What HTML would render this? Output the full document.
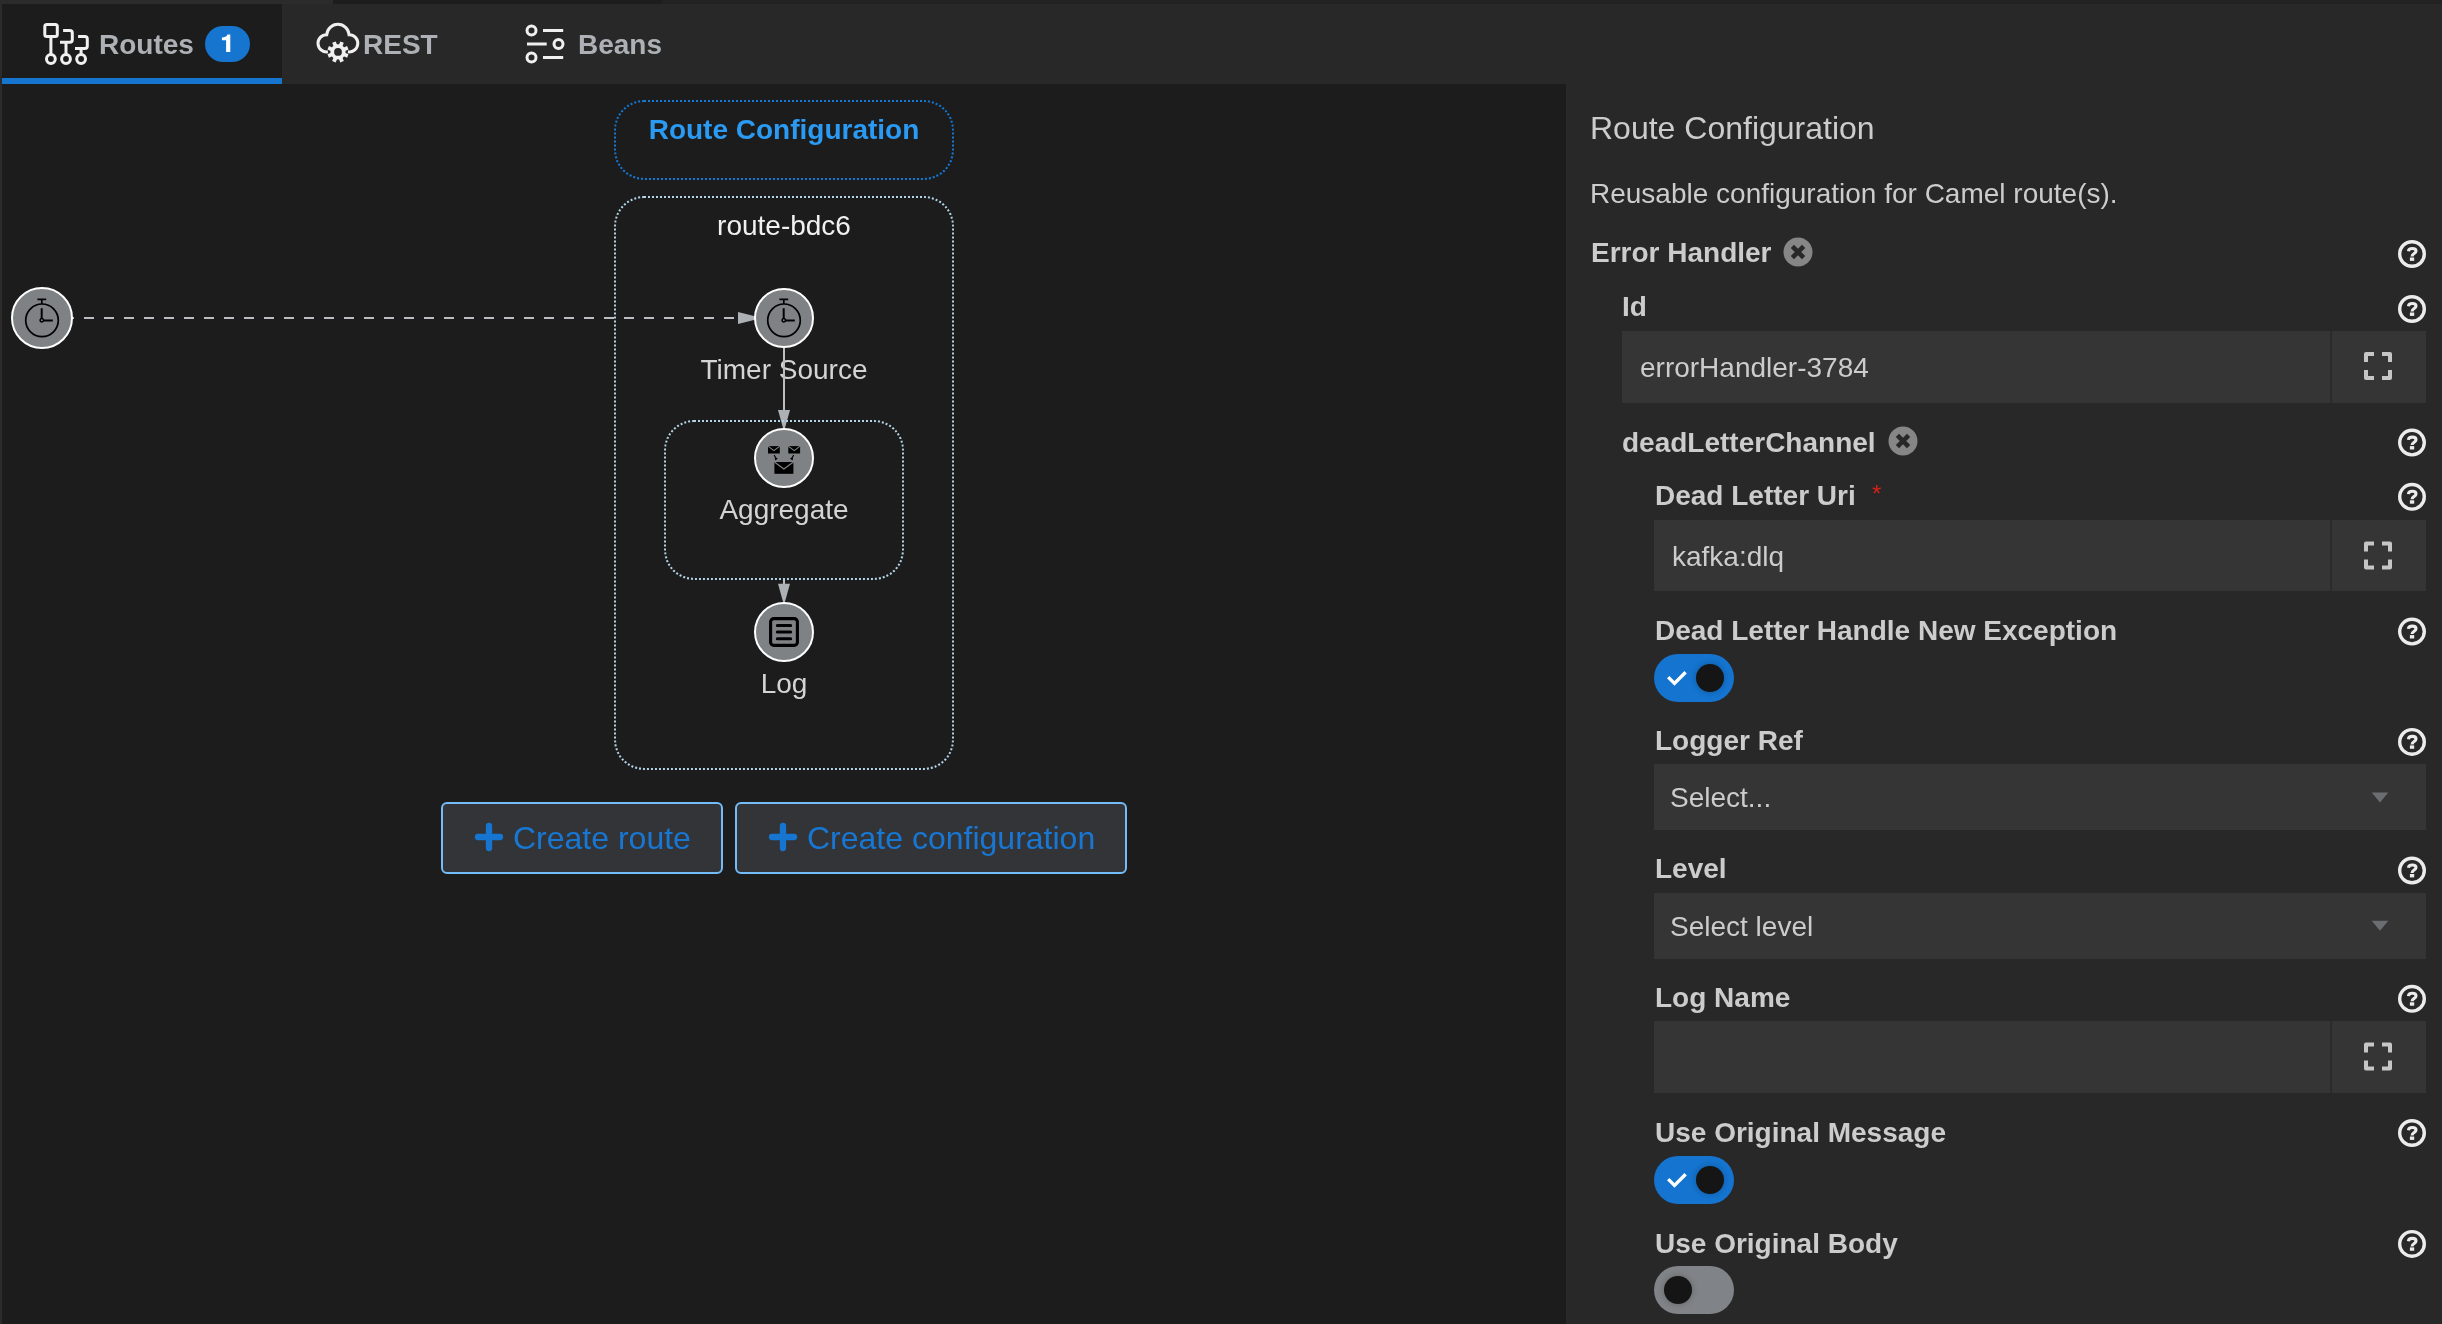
<!DOCTYPE html>
<html>
<head>
<meta charset="utf-8">
<title>Karavan</title>
<style>
html,body{margin:0;padding:0;}
body{width:2442px;height:1324px;overflow:hidden;background:#1c1c1c;font-family:"Liberation Sans",sans-serif;position:relative;}
.abs{position:absolute;}
.t{position:absolute;white-space:nowrap;line-height:1;will-change:transform;}
.b{font-weight:bold;}
#tabbar{left:0;top:0;width:2442px;height:84px;background:#282828;}
#topl{left:0;top:0;width:333px;height:4px;background:#2b2b2b;}
#topd{left:333px;top:0;width:329px;height:4px;background:#1d1d1d;}
#topr{left:662px;top:0;width:1780px;height:4px;background:#222222;}
#leftb{left:0;top:0;width:2px;height:1324px;background:#2b2b2b;}
#acttab{left:2px;top:4px;width:280px;height:74px;background:#1c1c1c;}
#actline{left:2px;top:78px;width:280px;height:6px;background:#1575cf;}
.tab{font-size:28px;font-weight:bold;color:#adb1b5;}
#badge{left:205px;top:26px;width:45px;height:36px;border-radius:18px;background:#1575cf;}
#panel{left:1566px;top:84px;width:876px;height:1240px;background:#282828;}
.lbl{font-size:28px;font-weight:bold;color:#cccccc;}
.inp{background:#353535;}
.val{font-size:28px;color:#cccccc;}
.glabel{font-size:28px;color:#d4d4d4;}
</style>
</head>
<body>
<div id="tabbar" class="abs"></div>
<div id="topl" class="abs"></div>
<div id="topd" class="abs"></div>
<div id="topr" class="abs"></div>
<div id="leftb" class="abs"></div>
<div id="acttab" class="abs"></div>
<div id="actline" class="abs"></div>

<!-- TAB ICONS -->
<div id="badge" class="abs"></div>
<svg class="abs" style="left:0;top:0" width="700" height="84" viewBox="0 0 700 84" fill="none" stroke="#f0f0f0" stroke-width="3">
  <!-- routes icon -->
  <rect x="44.8" y="24.5" width="12.5" height="12" rx="2"/>
  <path d="M50.9 38 V54"/>
  <circle cx="50.9" cy="59" r="4.4"/>
  <circle cx="66" cy="59" r="4.4"/>
  <circle cx="81.1" cy="59" r="4.4"/>
  <path d="M63.1 30.5 H69.8 Q72.3 30.5 72.3 33 V39.8 Q72.3 42.3 69.8 42.3 H60 M66 42.3 V54"/>
  <path d="M78.1 36.5 H84.8 Q87.3 36.5 87.3 39 V45.9 Q87.3 48.4 84.8 48.4 H75 M81.1 48.4 V54"/>
  <path d="M230.300 34.500 V51.900 H226.100 V40.300 H221.900 V37.500 C224.600 37.500 226.700 36.700 227.400 34.500 Z" fill="#fff" stroke="none"/>
  <!-- rest icon -->
  <path d="M327.900 51.800 A8.600 8.600 0 1 1 326.730 34.700 A11.200 11.200 0 0 1 349.070 34.700 A8.600 8.600 0 1 1 347.900 51.800"/>
  <g transform="translate(338 51.9)" fill="#f0f0f0" stroke="none"><path fill-rule="evenodd" d="M0 -7.600 A7.600 7.600 0 1 1 0 7.600 A7.600 7.600 0 1 1 0 -7.600 Z M0 -3.900 A3.900 3.900 0 1 0 0 3.900 A3.900 3.900 0 1 0 0 -3.900 Z"/><rect x="-1.900" y="-10.600" width="3.800" height="4.200" transform="rotate(22.5)"/><rect x="-1.900" y="-10.600" width="3.800" height="4.200" transform="rotate(67.5)"/><rect x="-1.900" y="-10.600" width="3.800" height="4.200" transform="rotate(112.5)"/><rect x="-1.900" y="-10.600" width="3.800" height="4.200" transform="rotate(157.5)"/><rect x="-1.900" y="-10.600" width="3.800" height="4.200" transform="rotate(202.5)"/><rect x="-1.900" y="-10.600" width="3.800" height="4.200" transform="rotate(247.5)"/><rect x="-1.900" y="-10.600" width="3.800" height="4.200" transform="rotate(292.5)"/><rect x="-1.900" y="-10.600" width="3.800" height="4.200" transform="rotate(337.5)"/></g>
  <!-- beans icon -->
  <circle cx="531.5" cy="30.4" r="4.5"/>
  <circle cx="558.5" cy="43.9" r="4.5"/>
  <circle cx="531.5" cy="57.5" r="4.5"/>
  <path d="M543 30.4 H563.2 M527 43.9 H546.7 M543 57.5 H563.2"/>
</svg>
<div class="t tab" style="left:98.500px;top:31px">Routes</div>
<div class="t tab" style="left:362.500px;top:31px">REST</div>
<div class="t tab" style="left:577.500px;top:31px">Beans</div>

<!-- BUTTON BOXES -->
<div class="abs" style="left:441px;top:802px;width:278px;height:68px;border:2px solid #73bcf7;border-radius:6px;background:#333438"></div>
<div class="abs" style="left:735px;top:802px;width:388px;height:68px;border:2px solid #73bcf7;border-radius:6px;background:#333438"></div>
<!-- GRAPH LABELS -->
<div class="t b" style="left:614px;width:340px;text-align:center;top:116px;font-size:28px;color:#2b9af3">Route Configuration</div>
<div class="t" style="left:614px;width:340px;text-align:center;top:212px;font-size:28px;color:#f0f0f0">route-bdc6</div>
<div class="t glabel" style="left:614px;width:340px;text-align:center;top:356px">Timer Source</div>
<div class="t glabel" style="left:614px;width:340px;text-align:center;top:496px">Aggregate</div>
<div class="t glabel" style="left:614px;width:340px;text-align:center;top:670px">Log</div>
<!-- CANVAS -->
<svg class="abs" style="left:0;top:84px" width="1566" height="1240" viewBox="0 84 1566 1240" fill="none">
  <defs><g id="timer" fill="none" stroke="#000"><circle cx="0" cy="2.300" r="16.300" stroke-width="1.700"/><path d="M-4.600 -18.600 H4.200 M-0.200 -18.600 V-14" stroke-width="1.700"/><path d="M-0.300 -9.800 V2.300 M0 2.400 H10.800" stroke-width="2"/><circle cx="-0.200" cy="2.300" r="1.700" fill="#7f8285" stroke-width="1.500"/></g><g id="agg"><rect x="-16" y="-11.900" width="11.800" height="7.400" fill="#000"/><path d="M-16 -11.900 L-10.100 -7.400 L-4.200 -11.900" stroke="#7f8285" stroke-width="1.100" fill="none"/><rect x="4.300" y="-11.900" width="11.800" height="7.400" fill="#000"/><path d="M4.300 -11.900 L10.200 -7.400 L16.100 -11.900" stroke="#7f8285" stroke-width="1.100" fill="none"/><rect x="-9.600" y="4" width="19" height="11.800" fill="#000"/><path d="M-9.600 4 L-0.100 10.900 L9.400 4" stroke="#7f8285" stroke-width="1.200" fill="none"/><path d="M-9.900 -2.900 L-7.300 1.200 M9.700 -2.900 L7.100 1.200" stroke="#000" stroke-width="1.100"/><path d="M-8.800 2.600 L-9.300 -0.300 L-6.100 0.200 Z M8.600 2.600 L9.100 -0.300 L5.900 0.200 Z" fill="#000"/></g><g id="log" fill="none" stroke="#000"><rect x="-13.400" y="-13.400" width="26.800" height="26.800" rx="3.200" stroke-width="3.100"/><path d="M-6.700 -6.600 H6.700 M-6.700 0 H6.700 M-6.700 6.700 H6.700" stroke-width="3" stroke-linecap="round"/></g></defs>
  <!-- edges -->
  <path d="M44 318 H738" stroke="#babdc1" stroke-width="2" stroke-dasharray="10 10"/>
  <path d="M738 312 L762 318 L738 324 Z" fill="#adb0b4"/>
  <path d="M784 348 V411" stroke="#babdc1" stroke-width="2"/>
  <path d="M778 410 L784 431.500 L790 410 Z" fill="#adb0b4"/>
  <path d="M784 579 V585" stroke="#babdc1" stroke-width="2"/>
  <path d="M778 583.700 L784 605.200 L790 583.700 Z" fill="#adb0b4"/>
  <!-- nodes -->
  <circle cx="42" cy="318" r="30" fill="#7f8285" stroke="#fff" stroke-width="2"/>
  <circle cx="784" cy="318" r="29" fill="#7f8285" stroke="#fff" stroke-width="2"/>
  <circle cx="784" cy="458" r="29" fill="#7f8285" stroke="#fff" stroke-width="2"/>
  <circle cx="784" cy="632" r="29" fill="#7f8285" stroke="#fff" stroke-width="2"/>
  <use href="#timer" x="42" y="318"/>
  <use href="#timer" x="784" y="318"/>
  <use href="#agg" x="784" y="458"/>
  <use href="#log" x="784" y="632"/>
  <!-- plus icons -->
  <path d="M478 837 H500 M489 826 V848" stroke="#1575d0" stroke-width="6.300" stroke-linecap="round"/>
  <path d="M772 837 H794 M783 826 V848" stroke="#1575d0" stroke-width="6.300" stroke-linecap="round"/>
</svg>
<!-- DOTTED BOXES -->
<div class="abs" style="left:614px;top:100px;width:336px;height:76px;border:2px dotted #1279d6;border-radius:30px"></div>
<div class="abs" style="left:614px;top:196px;width:336px;height:570px;border:2px dotted #b2d4e8;border-radius:30px"></div>
<div class="abs" style="left:664px;top:420px;width:236px;height:156px;border:2px dotted #b2d4e8;border-radius:30px"></div>

<!-- BUTTONS -->
<div class="t" style="left:513px;top:822px;font-size:32px;color:#1777d3">Create route</div>
<div class="t" style="left:807px;top:822px;font-size:32px;color:#1777d3">Create configuration</div>

<!-- PANEL -->
<div id="panel" class="abs"></div>
<!--PANEL-START-->
<div class="t" style="left:1590px;top:112px;font-size:32px;color:#cccccc">Route Configuration</div>
<div class="t" style="left:1590px;top:180px;font-size:28px;color:#cccccc">Reusable configuration for Camel route(s).</div>
<div class="t lbl" style="left:1591px;top:239px">Error Handler</div>
<div class="t lbl" style="left:1622px;top:293px">Id</div>
<div class="t lbl" style="left:1622px;top:429px">deadLetterChannel</div>
<div class="t lbl" style="left:1655px;top:482px">Dead Letter Uri</div>
<div class="t lbl" style="left:1655px;top:617px">Dead Letter Handle New Exception</div>
<div class="t lbl" style="left:1655px;top:727px">Logger Ref</div>
<div class="t lbl" style="left:1655px;top:855px">Level</div>
<div class="t lbl" style="left:1655px;top:984px">Log Name</div>
<div class="t lbl" style="left:1655px;top:1119px">Use Original Message</div>
<div class="t lbl" style="left:1655px;top:1230px">Use Original Body</div>
<div class="t" style="left:1871.500px;top:481.500px;font-size:24px;color:#d4211b">*</div>
<div class="abs inp" style="left:1622px;top:331px;width:804px;height:71.5px"></div>
<div class="abs" style="left:2330px;top:331px;width:2px;height:71.5px;background:#2b2b2b"></div>
<div class="t val" style="left:1640px;top:354px">errorHandler-3784</div>
<div class="abs inp" style="left:1654px;top:520px;width:772px;height:71px"></div>
<div class="abs" style="left:2330px;top:520px;width:2px;height:71px;background:#2b2b2b"></div>
<div class="t val" style="left:1672px;top:543px">kafka:dlq</div>
<div class="abs inp" style="left:1654px;top:764px;width:772px;height:65.5px"></div>
<div class="t val" style="left:1670px;top:784px">Select...</div>
<div class="abs inp" style="left:1654px;top:893px;width:772px;height:65.5px"></div>
<div class="t val" style="left:1670px;top:913px">Select level</div>
<div class="abs inp" style="left:1654px;top:1021px;width:772px;height:71.5px"></div>
<div class="abs" style="left:2330px;top:1021px;width:2px;height:71.5px;background:#2b2b2b"></div>
<div class="abs" style="left:1654px;top:654px;width:80px;height:48px;border-radius:24px;background:#1474cf"></div>
<div class="abs" style="left:1696px;top:664px;width:28px;height:28px;border-radius:14px;background:#151515;box-shadow:0 0 6px rgba(0,0,0,0.25)"></div>
<div class="abs" style="left:1654px;top:1156px;width:80px;height:48px;border-radius:24px;background:#1474cf"></div>
<div class="abs" style="left:1696px;top:1166px;width:28px;height:28px;border-radius:14px;background:#151515;box-shadow:0 0 6px rgba(0,0,0,0.25)"></div>
<div class="abs" style="left:1654px;top:1266px;width:80px;height:48px;border-radius:24px;background:#808387"></div>
<div class="abs" style="left:1664px;top:1276px;width:28px;height:28px;border-radius:14px;background:#151515;box-shadow:0 0 6px rgba(0,0,0,0.25)"></div>
<svg class="abs" style="left:1566px;top:84px" width="876" height="1240" viewBox="1566 84 876 1240" fill="none">
<defs>
<g id="help"><circle r="12.3" stroke="#ececec" stroke-width="3.4"/><path d="M-3.6 -2.7 C-3.3 -5.2 -1.5 -5.5 0.3 -5.5 C2.4 -5.5 4 -4.6 4 -2.9 C4 -0.3 0.1 -0.5 0.1 2.5" stroke="#ececec" stroke-width="3.1"/><rect x="-2.100" y="3.500" width="4.300" height="3.400" fill="#ececec"/></g>
<g id="close"><circle r="14.5" fill="#868686"/><path d="M-5.6 -5.6 L5.6 5.6 M5.6 -5.6 L-5.6 5.6" stroke="#282828" stroke-width="4.6"/></g>
<g id="expand" stroke="#c6c6c6" stroke-width="4" stroke-linejoin="round"><path d="M-12 -4 V-12 H-4 M4 -12 H12 V-4 M12 4 V12 H4 M-4 12 H-12 V4"/></g>
<g id="caret"><path d="M-8.300 -5 H8.300 L0 5 Z" fill="#6a6e73"/></g>
<g id="check"><path d="M-8.600 -0.400 L-2.300 5.900 L8.800 -5.200" stroke="#fff" stroke-width="3.4"/></g>
</defs>
<use href="#help" x="2412" y="254"/>
<use href="#help" x="2412" y="309"/>
<use href="#help" x="2412" y="442.6"/>
<use href="#help" x="2412" y="496.8"/>
<use href="#help" x="2412" y="631.6"/>
<use href="#help" x="2412" y="741.9"/>
<use href="#help" x="2412" y="870.5"/>
<use href="#help" x="2412" y="998.8"/>
<use href="#help" x="2412" y="1133"/>
<use href="#help" x="2412" y="1243.9"/>
<use href="#close" x="1798" y="252"/>
<use href="#close" x="1903" y="441"/>
<use href="#expand" x="2378" y="366"/>
<use href="#expand" x="2378" y="555.5"/>
<use href="#expand" x="2378" y="1056.5"/>
<use href="#caret" x="2380" y="797.5"/>
<use href="#caret" x="2380" y="925.7"/>
<use href="#check" x="1676.800" y="677.5"/>
<use href="#check" x="1676.800" y="1179.5"/>
</svg>
<!--PANEL-END-->
</body>
</html>
